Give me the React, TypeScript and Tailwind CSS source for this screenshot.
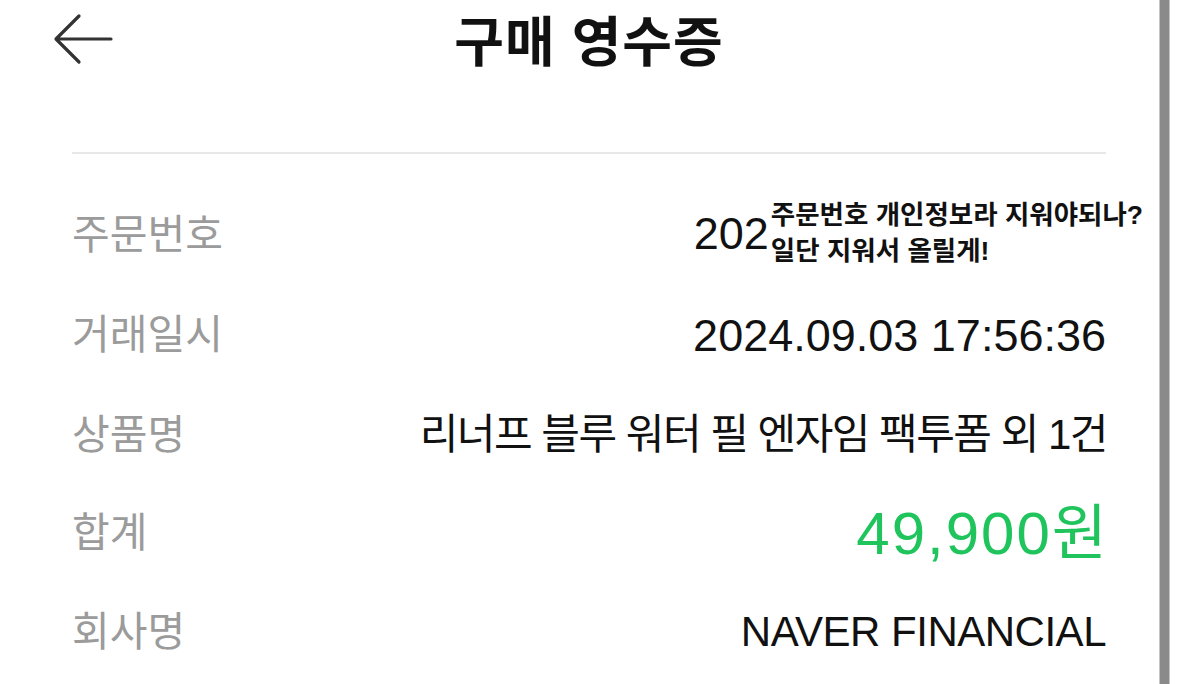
import React from "react";

const BackArrow = () => (
  <svg width="60" height="52" viewBox="0 0 60 52" fill="none">
    <path
      d="M58 26H4M26 3L3 26L26 49"
      stroke="#333"
      strokeWidth="3.2"
      strokeLinecap="round"
      strokeLinejoin="round"
    />
  </svg>
);

const Label = ({ children }: { children: React.ReactNode }) => (
  <span className="text-[41px] leading-none text-[#9b9b9b]">{children}</span>
);

const App = () => {
  return (
    <div
      className="flex h-[684px] w-[1179px] bg-white overflow-hidden"
      style={{ fontFamily: '"Liberation Sans", "Noto Sans CJK KR", sans-serif' }}
    >
      <div className="w-[1159px] pl-[72px] pr-[53px]">
        <header className="relative flex h-[86px] items-center justify-center">
          <div className="absolute left-[-19px] top-[13px]">
            <BackArrow />
          </div>
          <h1 className="text-[54px] font-bold leading-none text-[#111] tracking-[1px]">
            구매 영수증
          </h1>
        </header>

        <div className="mt-[66px] h-[2px] bg-[#e8e8e8]" />

        <div className="mt-[31px] flex flex-col">
          <div className="flex h-[100px] items-center justify-between">
            <Label>주문번호</Label>
            <div className="-mr-[37px] flex items-center">
              <span className="text-[45px] leading-none text-[#111] mt-[-4px]">202</span>
              <div className="ml-[2px] text-[26.5px] font-bold leading-[36px] text-[#111] mt-[-4px]">
                <div>주문번호 개인정보라 지워야되나?</div>
                <div>일단 지워서 올릴게!</div>
              </div>
            </div>
          </div>
          <div className="flex h-[100px] items-center justify-between">
            <Label>거래일시</Label>
            <span className="text-[45px] leading-none text-[#111]">2024.09.03 17:56:36</span>
          </div>
          <div className="flex h-[100px] items-center justify-between">
            <Label>상품명</Label>
            <span className="-mr-[1px] text-[42px] leading-none text-[#111] tracking-[-1.5px]">
              리너프 블루 워터 필 엔자임 팩투폼 외 1건
            </span>
          </div>
          <div className="flex h-[97px] items-center justify-between">
            <Label>합계</Label>
            <span className="-mr-[3px] text-[60px] leading-none text-[#1fc45c] tracking-[2px]">
              49,900원
            </span>
          </div>
          <div className="flex h-[100px] items-center justify-between">
            <Label>회사명</Label>
            <span className="text-[42px] leading-none text-[#111] tracking-[-0.5px]">
              NAVER FINANCIAL
            </span>
          </div>
        </div>
      </div>
      <div className="h-full w-[11px] border-x border-[#c4c4c4] bg-[#8a8a8a]" />
      <div className="h-full flex-1 bg-white" />
    </div>
  );
};

export default App;
